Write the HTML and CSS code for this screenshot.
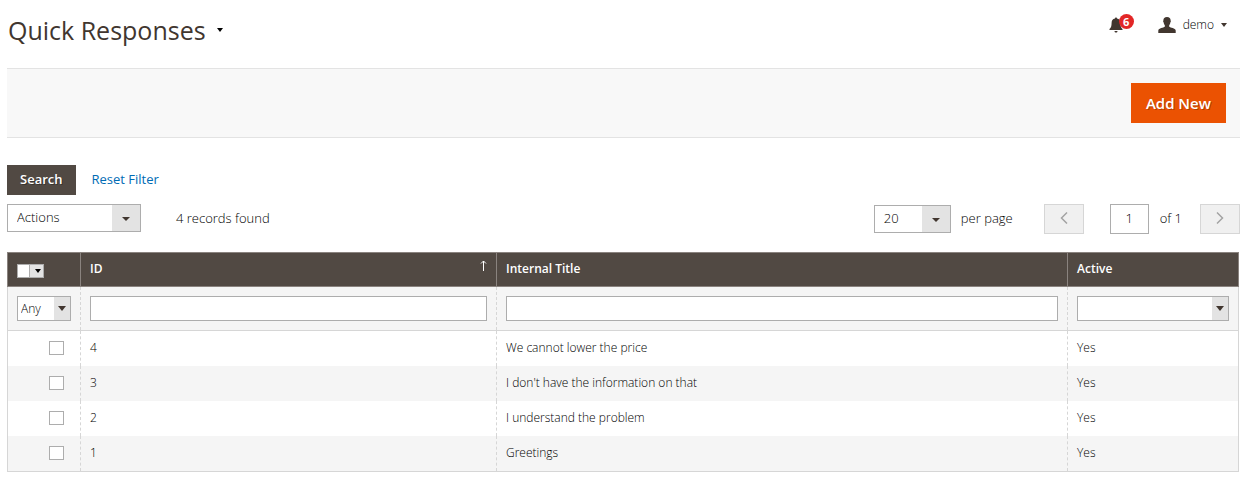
FILE: index.html
```html
<!DOCTYPE html>
<html lang="en">
  <head>
    <meta charset="utf-8">
    <title>Quick Responses</title>
    <link rel="stylesheet" href="styles.css">
  </head>

  <body>
    <header class="page-header">
      <h1 class="page-title">Quick Responses <span class="caret caret-small"></span></h1>
      <div class="user-menu">
        <button type="button" class="notifications" aria-label="Notifications">
          <svg width="14" height="16" viewBox="0 0 14 16" fill="#41362f">
            <path d="M7 0.5C6.3 0.5 6 1 6 1.6C3.6 2.1 2.600 3.8 2.600 6C2.600 9 2 10.7 0.5 12V13H13.500V12C12 10.700 11.400 9 11.400 6C11.400 3.800 10.400 2.100 8 1.600C8 1 7.700 0.500 7 0.500Z"/>
            <path d="M5.500 14H8.500C8.500 15 7.800 15.500 7 15.500C6.200 15.500 5.500 15 5.500 14Z"/>
          </svg>
          <span class="badge">6</span>
        </button>
        <button type="button" class="account">
          <svg width="18" height="16" viewBox="0 0 18 16" fill="#41362f">
            <path d="M9 0C6.600 0 5.300 1.200 5.400 3.600C5 3.800 5.100 5.200 5.700 5.500C5.900 6.800 6.200 7.600 6.800 8.100V9.800C5.500 10.800 0.700 11 0.300 13.500V16H17.700V13.500C17.300 11 12.500 10.800 11.200 9.800V8.100C11.800 7.600 12.100 6.800 12.300 5.500C12.900 5.200 13 3.800 12.600 3.600C12.700 1.200 11.400 0 9 0Z"/>
          </svg>
          <span>demo</span>
          <span class="caret"></span>
        </button>
      </div>
    </header>

    <div class="page-actions">
      <button type="button" class="button-primary">Add New</button>
    </div>

    <main>
      <div class="search-bar">
        <button type="button" class="button-search">Search</button>
        <button type="button" class="button-link">Reset Filter</button>
      </div>

      <div class="toolbar">
        <span class="select select-actions">
          <select aria-label="Actions">
            <option>Actions</option>
          </select>
        </span>
        <span class="records">4 records found</span>
        <div class="pager">
          <span class="select select-limit">
            <select id="limit">
              <option>20</option>
            </select>
          </span>
          <label class="limit-label" for="limit">per page</label>
          <button type="button" class="button-page" aria-label="Previous page" disabled>
            <svg width="8" height="12" viewBox="0 0 8 12" fill="none" stroke="#a3a3a3" stroke-width="1.5">
              <path d="M7 0.500L1.500 6L7 11.500"/>
            </svg>
          </button>
          <input type="text" id="page" class="page-number" value="1">
          <label class="page-label" for="page">of 1</label>
          <button type="button" class="button-page" aria-label="Next page" disabled>
            <svg width="8" height="12" viewBox="0 0 8 12" fill="none" stroke="#a3a3a3" stroke-width="1.5">
              <path d="M1 0.500L6.500 6L1 11.500"/>
            </svg>
          </button>
        </div>
      </div>

      <div class="grid-wrap">
        <table class="grid">
          <colgroup>
            <col class="col-select">
            <col class="col-id">
            <col>
            <col class="col-active">
          </colgroup>
          <thead>
            <tr class="headings">
              <th>
                <span class="select select-mass">
                  <select aria-label="Select rows">
                    <option></option>
                  </select>
                </span>
              </th>
              <th>
                <div class="sorted">
                  ID
                  <svg width="7" height="11" viewBox="0 0 7 11" fill="none" stroke="#fff">
                    <path d="M3.500 11V1M1 3.500L3.500 1L6 3.500"/>
                  </svg>
                </div>
              </th>
              <th>Internal Title</th>
              <th>Active</th>
            </tr>
            <tr class="filters">
              <td>
                <span class="select select-filter">
                  <select aria-label="Filter by selection">
                    <option>Any</option>
                  </select>
                </span>
              </td>
              <td><input type="text" class="filter-text" aria-label="Filter by ID"></td>
              <td><input type="text" class="filter-text" aria-label="Filter by title"></td>
              <td>
                <span class="select select-filter">
                  <select aria-label="Filter by active">
                    <option></option>
                  </select>
                </span>
              </td>
            </tr>
          </thead>
          <tbody>
            <tr>
              <td class="cell-check"><input type="checkbox" aria-label="Select 4"></td>
              <td>4</td>
              <td>We cannot lower the price</td>
              <td>Yes</td>
            </tr>
            <tr>
              <td class="cell-check"><input type="checkbox" aria-label="Select 3"></td>
              <td>3</td>
              <td>I don't have the information on that</td>
              <td>Yes</td>
            </tr>
            <tr>
              <td class="cell-check"><input type="checkbox" aria-label="Select 2"></td>
              <td>2</td>
              <td>I understand the problem</td>
              <td>Yes</td>
            </tr>
            <tr>
              <td class="cell-check"><input type="checkbox" aria-label="Select 1"></td>
              <td>1</td>
              <td>Greetings</td>
              <td>Yes</td>
            </tr>
          </tbody>
        </table>
      </div>
    </main>
  </body>
</html>
```

FILE: styles.css
```css
* {
  box-sizing: border-box;
}

body {
  margin: 0 7px;
  font-family: "Open Sans", sans-serif;
  font-size: 13px;
  font-weight: 300;
  line-height: 18px;
  color: #000;
  background: #fff;
}

button,
input,
select {
  margin: 0;
  padding: 0;
  font: inherit;
  color: inherit;
  border-radius: 0;
}

button {
  border: none;
  background: none;
  cursor: pointer;
}

svg {
  display: block;
}

/* Header */
.page-header {
  display: flex;
  justify-content: space-between;
  align-items: flex-start;
  height: 68px;
  padding: 11px 13px 0 1px;
}

.page-title {
  display: flex;
  align-items: center;
  gap: 11px;
  margin: 0;
  font-size: 25px;
  font-weight: 400;
  line-height: 38px;
  color: #41362f;
}

.caret {
  border: 3px solid transparent;
  border-top: 4px solid #41362f;
  border-bottom: none;
}

.caret-small {
  border-top-color: #000;
}

.user-menu {
  display: flex;
  align-items: center;
  gap: 22px;
  padding-top: 5px;
}

.notifications {
  position: relative;
  padding: 0 13px 0 0;
}

.badge {
  position: absolute;
  top: -3px;
  right: 2px;
  width: 15px;
  height: 15px;
  border-radius: 50%;
  background: #e22626;
  color: #fff;
  font-size: 11px;
  font-weight: 700;
  line-height: 15px;
  text-align: center;
}

.account {
  display: flex;
  align-items: center;
  gap: 7px;
  font-size: 12px;
}

/* Page actions */
.page-actions {
  display: flex;
  justify-content: flex-end;
  padding: 14px;
  border-top: 1px solid #e3e3e3;
  border-bottom: 1px solid #e3e3e3;
  background: #f8f8f8;
}

.button-primary {
  height: 40px;
  padding: 0 15px;
  background: #eb5202;
  color: #fff;
  font-size: 15px;
  font-weight: 600;
  text-shadow: 1px 1px 0 rgba(0, 0, 0, 0.25);
}

/* Search and toolbar */
.search-bar {
  display: flex;
  gap: 16px;
  margin-top: 27px;
}

.button-search {
  height: 30px;
  padding: 0 13px 2px;
  background: #514943;
  color: #fff;
  font-weight: 600;
  text-shadow: 1px 1px 0 rgba(0, 0, 0, 0.3);
}

.button-link {
  padding-bottom: 2px;
  color: #006bb4;
  font-weight: 400;
}

.toolbar {
  display: flex;
  align-items: flex-start;
  margin: 9px 0 18px;
}

.records {
  margin-left: 35px;
  line-height: 28px;
}

.pager {
  display: flex;
  align-items: center;
  margin-left: auto;
}

.limit-label {
  margin: 0 31px 0 10px;
}

.page-label {
  margin: 0 18px 0 11px;
}

.limit-label,
.page-label {
  padding-bottom: 2px;
}

.button-page {
  display: flex;
  align-items: center;
  justify-content: center;
  width: 40px;
  height: 30px;
  padding-bottom: 2px;
  border: 1px solid #d6d6d6;
  background: #f0f0f0;
}

.page-number {
  width: 39px;
  height: 30px;
  margin-left: 26px;
  padding-bottom: 2px;
  border: 1px solid #adadad;
  text-align: center;
}

/* Select boxes */
.select {
  position: relative;
  display: inline-block;
  vertical-align: top;
}

.select select {
  display: block;
  width: 100%;
  height: 28px;
  padding: 0 9px 2px;
  border: 1px solid #adadad;
  background: #fff;
  appearance: none;
}

.select::before {
  content: "";
  position: absolute;
  top: 1px;
  right: 1px;
  bottom: 1px;
  width: 28px;
  background: #e3e3e3;
  pointer-events: none;
}

.select::after {
  content: "";
  position: absolute;
  top: 50%;
  right: 11px;
  border: 4px solid transparent;
  border-top: 4px solid #41362f;
  border-bottom: none;
  margin-top: -1px;
  pointer-events: none;
}

.select-actions {
  width: 134px;
}

.select-limit {
  width: 77px;
}

.select-mass {
  width: 27px;
}

.select-mass select {
  height: 14px;
}

.select-mass::before {
  width: 13px;
  border-left: 1px solid #adadad;
}

.select-mass::after {
  right: 3px;
  border-width: 4px 3px 0;
  border-top-color: #000;
  margin-top: -2px;
}

.select-filter {
  display: block;
}

.select-filter select {
  height: 25px;
  padding: 0 3px;
}

.select-filter::before {
  width: 16px;
}

.select-filter::after {
  right: 5px;
  border-top-width: 5px;
  margin-top: -3px;
}

/* Grid */
.grid-wrap {
  padding-right: 1px;
}

.grid {
  width: 100%;
  border: 1px solid #d6d6d6;
  border-collapse: collapse;
  table-layout: fixed;
  font-size: 12px;
}

.col-select {
  width: 73px;
}

.col-id {
  width: 416px;
}

.col-active {
  width: 171px;
}

.headings th {
  height: 34px;
  padding: 0 9px 2px;
  border: 1px solid #8a837f;
  background: #514943;
  color: #fff;
  font-weight: 600;
  text-align: left;
}

.headings th:first-child {
  padding: 6px 9px 0;
}

.sorted {
  display: flex;
  justify-content: space-between;
}

.filters td {
  height: 44px;
  border-bottom: 1px solid #d6d6d6;
  background: #f5f5f5;
}

.filter-text {
  display: block;
  width: 100%;
  height: 25px;
  padding: 0 4px;
  border: 1px solid #adadad;
}

.grid td {
  padding: 0 9px;
  border-left: 1px dashed #d6d6d6;
}

.grid td:first-child {
  border-left-style: solid;
}

.grid tbody td {
  height: 35px;
  padding-bottom: 1px;
}

.grid tbody tr:last-child td {
  height: 36px;
}

.grid tbody tr:nth-child(even) {
  background: #f5f5f5;
}

.grid tbody .cell-check {
  padding: 0 16px 0 0;
}

.cell-check input {
  display: block;
  width: 15px;
  height: 14px;
  margin-left: auto;
  border: 1px solid #adadad;
  background: #fff;
  appearance: none;
}
```
